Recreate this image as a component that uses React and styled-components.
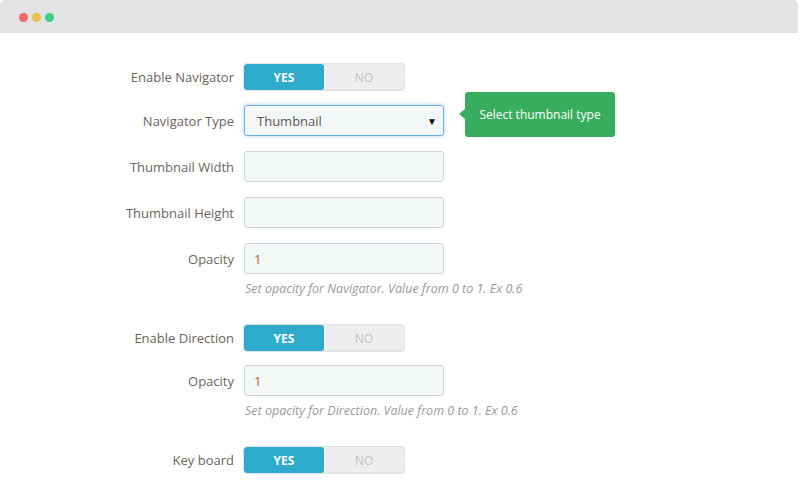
import React from "react";
import styled, { createGlobalStyle } from "styled-components";

const Global = createGlobalStyle`
  html, body { margin: 0; padding: 0; background: #fff; }
  body { font-family: "Open Sans", "Liberation Sans", sans-serif; }
  * { box-sizing: border-box; }
`;

const Window = styled.div`
  width: 800px;
  height: 480px;
  background: #fff;
  overflow: hidden;
`;

const TitleBar = styled.div`
  width: 798px;
  height: 33px;
  background: #e3e3e3;
  border-radius: 5px 5px 0 0;
  display: flex;
  align-items: center;
  gap: 4px;
  padding: 1px 0 0 19px;
`;

const Dot = styled.span`
  width: 9px;
  height: 9px;
  border-radius: 50%;
  background: ${(p) => p.$color};
`;

const Form = styled.div`
  padding-top: 31px;
  display: flex;
  flex-direction: column;
`;

const Row = styled.div`
  display: flex;
  align-items: center;
  margin-top: ${(p) => p.$mt || 0}px;
  position: relative;
`;

const Label = styled.label`
  width: 234px;
  text-align: right;
  margin-right: 10px;
  font-size: 13px;
  color: #6b6461;
`;

const Toggle = styled.div`
  display: flex;
  width: 160px;
  height: 26px;
  border-radius: 3px;
  overflow: hidden;
  background: #eeeeee;
  box-shadow: inset 0 -1px 0 #e2e2e2, 0 0 0 1px #e4e4e4;
`;

const ToggleOpt = styled.div`
  flex: 1;
  display: flex;
  align-items: center;
  justify-content: center;
  font-size: 12px;
  font-weight: ${(p) => (p.$on ? 700 : 400)};
  color: ${(p) => (p.$on ? "#fff" : "#c4c4c4")};
  background: ${(p) => (p.$on ? "#2eaacd" : "transparent")};
  border-radius: ${(p) => (p.$on ? "3px" : "0")};
`;

const Input = styled.div`
  width: 200px;
  height: 31px;
  border: 1px solid ${(p) => (p.$focus ? "#66afe9" : "#cfd6d9")};
  box-shadow: ${(p) => (p.$focus ? "0 0 4px rgba(102,175,233,0.55)" : "none")};
  background: #f4f7f8;
  border-radius: 3px;
  display: flex;
  align-items: center;
  padding: 0 6px 0 ${(p) => (p.$focus ? 12 : 9)}px;
  font-size: 13px;
  color: ${(p) => (p.$value ? "#b0682c" : "#555")};
`;

const SelectText = styled.span`
  flex: 1;
  color: #5d5553;
`;

const Caret = styled.span`
  font-size: 10px;
  color: #111;
`;

const Help = styled.div`
  margin-left: 245px;
  margin-top: ${(p) => p.$mt || 0}px;
  font-size: 12.5px;
  font-style: italic;
  color: #9a9a9a;
  line-height: 17px;
`;

const Tooltip = styled.div`
  position: absolute;
  left: 465px;
  top: -13px;
  width: 150px;
  height: 45px;
  background: #38ad5d;
  border-radius: 3px;
  color: #fff;
  font-size: 12px;
  display: flex;
  align-items: center;
  justify-content: center;
  &::before {
    content: "";
    position: absolute;
    left: -6px;
    top: 17px;
    border-style: solid;
    border-width: 5px 6px 5px 0;
    border-color: transparent #38ad5d transparent transparent;
  }
`;

const YesNo = () => (
  <Toggle>
    <ToggleOpt $on>YES</ToggleOpt>
    <ToggleOpt>NO</ToggleOpt>
  </Toggle>
);

export default function App() {
  return (
    <>
      <Global />
      <Window>
        <TitleBar>
          <Dot $color="#ee6a67" />
          <Dot $color="#e5c14b" />
          <Dot $color="#35d180" />
        </TitleBar>
        <Form>
          <Row>
            <Label>Enable Navigator</Label>
            <YesNo />
          </Row>
          <Row $mt={15}>
            <Label>Navigator Type</Label>
            <Input $focus>
              <SelectText>Thumbnail</SelectText>
              <Caret>▼</Caret>
            </Input>
            <Tooltip>Select thumbnail type</Tooltip>
          </Row>
          <Row $mt={15}>
            <Label>Thumbnail Width</Label>
            <Input />
          </Row>
          <Row $mt={15}>
            <Label>Thumbnail Height</Label>
            <Input />
          </Row>
          <Row $mt={15}>
            <Label>Opacity</Label>
            <Input $value>1</Input>
          </Row>
          <Help $mt={6}>Set opacity for Navigator. Value from 0 to 1. Ex 0.6</Help>
          <Row $mt={28}>
            <Label>Enable Direction</Label>
            <YesNo />
          </Row>
          <Row $mt={14}>
            <Label>Opacity</Label>
            <Input $value>1</Input>
          </Row>
          <Help $mt={6}>Set opacity for Direction. Value from 0 to 1. Ex 0.6</Help>
          <Row $mt={28}>
            <Label>Key board</Label>
            <YesNo />
          </Row>
        </Form>
      </Window>
    </>
  );
}
